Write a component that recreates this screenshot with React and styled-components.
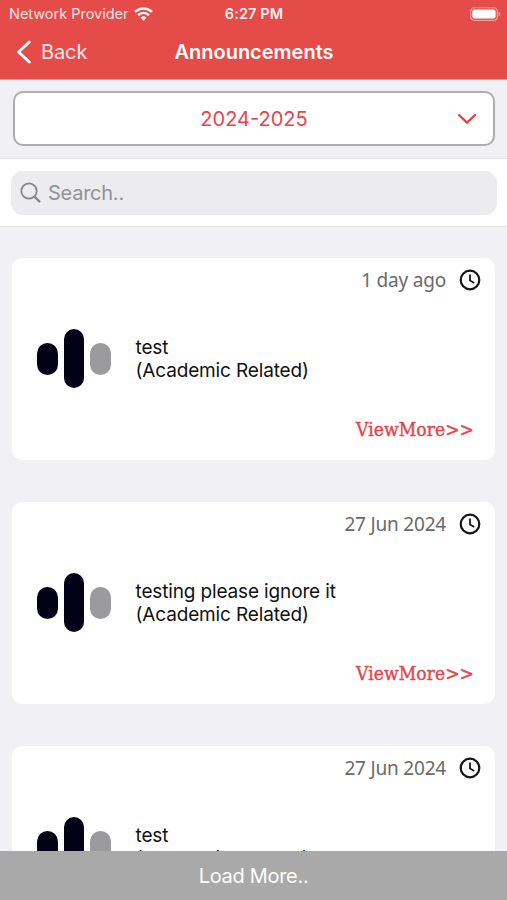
import React from 'react';
import styled, { createGlobalStyle, css } from 'styled-components';

const announcements = [
  { id: 1, date: '1 day ago', title: 'test', category: 'Academic Related' },
  {
    id: 2,
    date: '27 Jun 2024',
    title: 'testing please ignore it',
    category: 'Academic Related',
  },
  { id: 3, date: '27 Jun 2024', title: 'test', category: 'Academic Related' },
];

export default function App() {
  return (
    <Screen>
      <GlobalStyle />
      <Header>
        <StatusBar>
          <Carrier>
            <CarrierName>Network Provider</CarrierName>
            <WifiIcon />
          </Carrier>
          <Time>6:27 PM</Time>
          <BatteryIcon />
        </StatusBar>
        <NavBar>
          <BackButton>
            <BackIcon />
            <BackLabel>Back</BackLabel>
          </BackButton>
          <Title>Announcements</Title>
        </NavBar>
      </Header>
      <YearSection>
        <YearSelect>
          <YearText>2024-2025</YearText>
          <ChevronIcon />
        </YearSelect>
      </YearSection>
      <SearchSection>
        <SearchBox>
          <SearchIcon />
          <Placeholder>Search..</Placeholder>
        </SearchBox>
      </SearchSection>
      <List>
        {announcements.map((item) => (
          <AnnouncementCard key={item.id} {...item} />
        ))}
      </List>
      <LoadMore>
        <LoadMoreText>Load More..</LoadMoreText>
      </LoadMore>
    </Screen>
  );
}

function AnnouncementCard({ date, title, category }) {
  return (
    <Card>
      <DateRow>
        <DateText>{date}</DateText>
        <ClockIcon />
      </DateRow>
      <CardBody>
        <Logo>
          <LogoBar $height={32} />
          <LogoBar $height={59} />
          <LogoBar $height={32} $muted />
        </Logo>
        <CardText>
          <CardLine>{title}</CardLine>
          <CardLine>({category})</CardLine>
        </CardText>
      </CardBody>
      <ViewMore>
        <ViewMoreText>ViewMore&gt;&gt;</ViewMoreText>
      </ViewMore>
    </Card>
  );
}

function WifiIcon() {
  return (
    <svg width="19" height="14" viewBox="0 0 19 14" fill="none" stroke="#fff">
      <path d="M1 4.9a12.2 12.2 0 0 1 17 0" strokeWidth="2.5" />
      <path d="M4 8.1a7.8 7.8 0 0 1 11 0" strokeWidth="2.3" />
      <path d="M9.5 13.7 6.6 10.7a4.2 4.2 0 0 1 5.8 0z" fill="#fff" stroke="none" />
    </svg>
  );
}

function BatteryIcon() {
  return (
    <svg width="31" height="14" viewBox="0 0 31 14">
      <rect x="0.7" y="0.7" width="26.6" height="12.6" rx="3.6" fill="none" stroke="#f19a97" strokeWidth="1.3" />
      <rect x="2.4" y="2.4" width="23.2" height="9.2" rx="2" fill="#fff" />
      <path d="M28.5 4.5c2.4 1 2.4 4 0 5z" fill="#f19a97" />
    </svg>
  );
}

function BackIcon() {
  return (
    <svg width="16" height="24" viewBox="0 0 16 24" fill="none">
      <path d="M13.3 2 2.6 12l10.7 10" stroke="#fff" strokeWidth="2.9" strokeLinecap="round" strokeLinejoin="round" />
    </svg>
  );
}

function ChevronIcon() {
  return (
    <svg width="20" height="12" viewBox="0 0 20 12" fill="none">
      <path d="m2 2 8 7.7L18 2" stroke="#df4349" strokeWidth="2.3" strokeLinecap="round" strokeLinejoin="round" />
    </svg>
  );
}

function SearchIcon() {
  return (
    <svg width="22" height="22" viewBox="0 0 22 22" fill="none" stroke="#85858a">
      <circle cx="9" cy="9" r="7.7" strokeWidth="1.8" />
      <path d="m14.6 14.6 4.8 4.9" strokeWidth="2.3" strokeLinecap="round" />
    </svg>
  );
}

function ClockIcon() {
  return (
    <svg width="22" height="22" viewBox="0 0 22 22" fill="none" stroke="#151515">
      <circle cx="11" cy="11" r="9.3" strokeWidth="2.2" />
      <path d="M11 5.5v5.9l4.2 2.5" strokeWidth="1.8" />
    </svg>
  );
}

const GlobalStyle = createGlobalStyle`
  * {
    box-sizing: border-box;
  }

  body {
    margin: 0;
    background: #f0f0f5;
    font-family: Inter, 'Liberation Sans', sans-serif;
  }

  svg {
    display: block;
    flex-shrink: 0;
  }
`;

const center = css`
  display: flex;
  align-items: center;
  justify-content: center;
`;

const Screen = styled.div`
  display: flex;
  flex-direction: column;
  width: 507px;
  height: 900px;
  overflow: hidden;
  background: #f0f0f5;
`;

const Header = styled.header`
  flex: none;
  height: 80px;
  color: #fff;
  background: #e54b48;
  border-bottom: 1px solid #efa3a5;
`;

const StatusBar = styled.div`
  display: grid;
  grid-template-columns: 1fr auto 1fr;
  align-items: center;
  height: 27px;
  padding: 0 8px 0 9px;

  > :last-child {
    justify-self: end;
    margin-right: -2px;
  }
`;

const Carrier = styled.div`
  display: flex;
  align-items: center;
  gap: 6px;
`;

const CarrierName = styled.span`
  color: #ffe3e1;
  font-size: 14.5px;
  letter-spacing: -0.02px;
  white-space: nowrap;
`;

const Time = styled.span`
  color: #fff0ef;
  font-size: 14.5px;
  font-weight: 600;
  letter-spacing: 0.1px;
`;

const NavBar = styled.div`
  display: grid;
  grid-template-columns: 1fr auto 1fr;
  align-items: center;
  height: 50px;
  padding: 0 15px 0 16px;
`;

const BackButton = styled.div`
  display: flex;
  align-items: center;
  gap: 9px;
`;

const BackLabel = styled.span`
  color: #ffeae9;
  font-size: 20px;
  letter-spacing: -0.1px;
`;

const Title = styled.h1`
  margin: 0;
  font-size: 20px;
  font-weight: 600;
`;

const YearSection = styled.section`
  flex: none;
  height: 79px;
  padding: 11px 12px 0 13px;
  border-bottom: 1px solid #e3e3e6;
`;

const YearSelect = styled.div`
  display: grid;
  grid-template-columns: 1fr auto 1fr;
  align-items: center;
  height: 55px;
  padding: 0 16px;
  background: #fff;
  border: 2px solid #adadb0;
  border-radius: 10px;

  > :last-child {
    justify-self: end;
  }
`;

const YearText = styled.span`
  grid-column: 2;
  color: #e5454d;
  font-size: 20px;
`;

const SearchSection = styled.section`
  flex: none;
  height: 68px;
  padding: 12px 10px 0 11px;
  background: #fff;
  border-bottom: 1px solid #e6e6e9;
`;

const SearchBox = styled.div`
  display: flex;
  align-items: center;
  gap: 6px;
  height: 44px;
  padding-left: 9px;
  background: #ececee;
  border-radius: 12px;
`;

const Placeholder = styled.span`
  color: #919196;
  font-size: 20px;
  letter-spacing: -0.25px;
`;

const List = styled.main`
  display: flex;
  flex: 1;
  flex-direction: column;
  gap: 42px;
  min-height: 0;
  padding: 31px 12px 0;
  overflow: hidden;
`;

const Card = styled.article`
  display: grid;
  flex: none;
  grid-template-rows: 44px 113px 45px;
  height: 202px;
  background: #fff;
  border-radius: 10px;
`;

const DateRow = styled.div`
  display: flex;
  align-items: center;
  justify-content: flex-end;
  gap: 13px;
  padding-right: 14px;
`;

const DateText = styled.span`
  color: #6a6a6a;
  font-family: 'Noto Sans', sans-serif;
  font-size: 19px;
  letter-spacing: -0.2px;
`;

const CardBody = styled.div`
  display: flex;
  align-items: center;
  padding-left: 25px;
`;

const Logo = styled.div`
  display: flex;
  align-items: center;
  gap: 6px;
`;

const LogoBar = styled.div`
  width: 20.7px;
  height: ${({ $height }) => $height}px;
  background: ${({ $muted }) => ($muted ? '#9b9b9e' : '#020116')};
  border-radius: 11px;
`;

const CardText = styled.div`
  margin-left: 24.5px;
`;

const CardLine = styled.p`
  margin: 0;
  color: #111;
  font-size: 19px;
  letter-spacing: -0.15px;
  line-height: 23px;
`;

const ViewMore = styled.div`
  display: flex;
  align-items: center;
  justify-content: flex-end;
  padding: 0 21px 17px 0;
`;

const ViewMoreText = styled.span`
  color: #e5454d;
  font-family: 'DejaVu Serif Condensed', 'DejaVu Serif', serif;
  font-size: 19px;
  letter-spacing: 0.1px;
  -webkit-text-stroke: 0.4px #e5454d;
`;

const LoadMore = styled.footer`
  ${center}
  flex: none;
  height: 49px;
  background: #a9a9a9;
`;

const LoadMoreText = styled.span`
  color: #fff;
  font-size: 20px;
  letter-spacing: -0.3px;
`;
